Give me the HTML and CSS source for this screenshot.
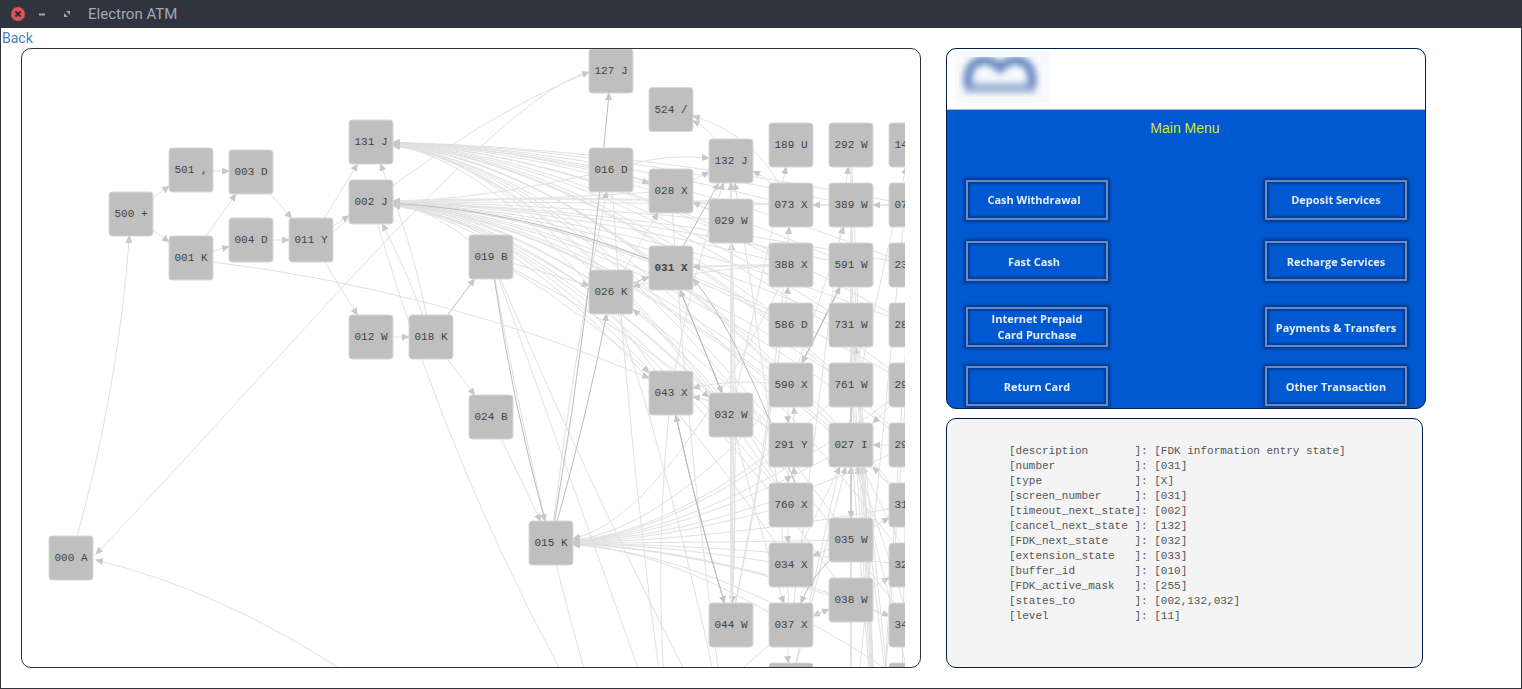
FILE: index.html
```html
<!DOCTYPE html>
<html lang="en">
<head>
    <meta charset="UTF-8">
    <title>Electron ATM</title>
    <link rel="stylesheet" href="styles.css">
</head>
<body>

    <div class="titlebar">
        <svg class="win-btn" width="16" height="16" viewBox="0 0 16 16">
            <circle cx="8" cy="8" r="7" fill="#d9545c"/>
            <path d="M5.5 5.5l5 5M10.5 5.5l-5 5" stroke="#3a2a33" stroke-width="2"/>
        </svg>
        <svg class="win-btn" width="16" height="16" viewBox="0 0 16 16">
            <path d="M5 8.5h6" stroke="#a4a9b4" stroke-width="2"/>
        </svg>
        <svg class="win-btn" width="16" height="16" viewBox="0 0 16 16">
            <path d="M8 5h4v4zM10 11H6V7z" fill="#a4a9b4"/>
        </svg>
        <span class="title">Electron ATM</span>
    </div>

    <a class="back-link" href="#">Back</a>

    <div class="content">
        <div class="graph-panel">
            <svg id="graph" width="883" height="618" viewBox="22 49 883 618">
                <defs>
                    <marker id="arrow" markerUnits="userSpaceOnUse" markerWidth="8" markerHeight="7" refX="7" refY="3.5" orient="auto">
                        <path d="M0 0L8 3.5L0 7z" fill="#c8c8c8"/>
                    </marker>
                </defs>
            </svg>
        </div>

        <div class="side-column">
            <div class="atm-screen">
                <div class="atm-header">
                    <svg width="96" height="52" viewBox="0 0 96 52">
                        <defs>
                            <filter id="logoBlur"><feGaussianBlur stdDeviation="3.2"/></filter>
                        </defs>
                        <rect width="96" height="52" fill="#f7f9fc"/>
                        <g filter="url(#logoBlur)">
                            <rect x="10" y="32" width="70" height="10" fill="#9fb4d6"/>
                            <path d="M13 36V28C13 8 33 4 45 17C57 4 77 8 77 28V36" fill="none" stroke="#6a8cc2" stroke-width="9"/>
                        </g>
                    </svg>
                </div>
                <div class="atm-title">Main Menu</div>
                <div class="atm-menu">
                    <div class="atm-btn atm-btn-shift">Cash Withdrawal</div>
                    <div class="atm-btn">Deposit Services</div>
                    <div class="atm-btn atm-btn-shift atm-btn-low">Fast Cash</div>
                    <div class="atm-btn atm-btn-low">Recharge Services</div>
                    <div class="atm-btn">Internet Prepaid<br>Card Purchase</div>
                    <div class="atm-btn atm-btn-low">Payments &amp; Transfers</div>
                    <div class="atm-btn atm-btn-low">Return Card</div>
                    <div class="atm-btn atm-btn-low">Other Transaction</div>
                </div>
            </div>

            <div class="state-panel">
<pre class="state-text">[description       ]: [FDK information entry state]
[number            ]: [031]
[type              ]: [X]
[screen_number     ]: [031]
[timeout_next_state]: [002]
[cancel_next_state ]: [132]
[FDK_next_state    ]: [032]
[extension_state   ]: [033]
[buffer_id         ]: [010]
[FDK_active_mask   ]: [255]
[states_to         ]: [002,132,032]
[level             ]: [11]</pre>
            </div>
        </div>
    </div>

    <script src="graph.js"></script>
</body>
</html>
```

FILE: styles.css
```css
* {
    box-sizing: border-box;
}

html, body {
    margin: 0;
    height: 689px;
    overflow: hidden;
}

body {
    background-color: white;
    border: 1px solid #2f343f;
    border-top: none;
    font-family: Roboto, sans-serif;
    font-size: 14px;
}

.titlebar {
    display: flex;
    align-items: center;
    height: 28px;
    padding-left: 9px;
    gap: 8px;
    background-color: #2f343f;
}

.title {
    margin-left: 6px;
    color: #a3a9b5;
    font-size: 15px;
}

.back-link {
    display: block;
    height: 20px;
    padding-left: 1px;
    line-height: 20px;
    color: #3f80c5;
    text-decoration: none;
}

.content {
    display: flex;
    align-items: flex-start;
    padding-left: 20px;
    gap: 25px;
}

.graph-panel {
    width: 900px;
    height: 620px;
    border: 1px solid #333;
    border-radius: 10px;
    overflow: hidden;
}

#graph {
    display: block;
}

.edge {
    fill: none;
    stroke: #e0e0e0;
    stroke-width: 1;
}

.edge-strong {
    stroke: #bcbcbc;
}

.edge-thick {
    stroke: #e6e6e6;
    stroke-width: 2;
}

.node-box {
    fill: #bfbfbf;
    stroke: #d8d8d8;
    stroke-width: 1;
}

.node-label {
    fill: #444;
    font-family: "Liberation Mono", monospace;
    font-size: 11px;
    text-anchor: middle;
    dominant-baseline: central;
}

.node-current .node-label {
    font-weight: bold;
}

.side-column {
    display: flex;
    flex-direction: column;
    width: 480px;
    gap: 9px;
}

.atm-screen {
    height: 361px;
    background-color: #0059d1;
    border: 1px solid #001f4d;
    border-radius: 10px;
    overflow: hidden;
}

.atm-header {
    height: 61px;
    padding: 2px 0 0 8px;
    background-color: white;
    border-bottom: 1px solid #a9bfdc;
}

.atm-header svg {
    display: block;
}

.atm-title {
    height: 70px;
    padding: 10px 2px 0 0;
    text-align: center;
    color: #d6e62e;
    font-family: "Liberation Sans", sans-serif;
    font-size: 14px;
    line-height: 17px;
}

.atm-menu {
    display: grid;
    grid-template-columns: 142px 142px;
    grid-template-rows: 61px 66px 59px 40px;
    justify-content: space-between;
    align-items: start;
    padding: 0 18px 0 19px;
}

.atm-btn {
    display: flex;
    align-items: center;
    justify-content: center;
    height: 40px;
    text-align: center;
    color: #e8eef8;
    font-family: "Open Sans", sans-serif;
    font-size: 11px;
    font-weight: 700;
    line-height: 16px;
    border: 2px solid #6f8ab8;
    box-shadow: 0 0 3px 2px #00398f, inset 0 0 2px 2px #003f9e;
    filter: blur(0.3px);
}

.atm-btn-shift {
    padding-right: 6px;
}

.atm-btn-low {
    padding-top: 2px;
}

.state-panel {
    width: 477px;
    height: 250px;
    padding: 25px 0 0 62px;
    background-color: #f4f4f4;
    border: 1px solid #001f4d;
    border-radius: 10px;
}

.state-text {
    margin: 0;
    color: #555;
    font-family: "Liberation Mono", monospace;
    font-size: 11px;
    line-height: 15px;
}
```

FILE: graph.js
```js
// Node positions come from the layout: name -> centre x, y
const columns = {
    71: { "000 A": 558 },
    131: { "500 +": 214 },
    191: { "501 ,": 170, "001 K": 258 },
    251: { "003 D": 172, "004 D": 240 },
    311: { "011 Y": 240 },
    371: { "131 J": 142, "002 J": 202, "012 W": 337 },
    431: { "018 K": 337 },
    491: { "019 B": 257, "024 B": 417 },
    551: { "015 K": 543 },
    611: { "127 J": 71, "016 D": 170, "026 K": 292 },
    671: { "524 /": 109.5, "028 X": 191, "031 X": 268, "043 X": 393 },
    731: { "132 J": 161, "029 W": 221, "032 W": 415, "044 W": 625 },
    791: { "189 U": 145, "073 X": 205, "388 X": 265, "586 D": 325, "590 X": 385, "291 Y": 445, "760 X": 505, "034 X": 565, "037 X": 625, "040 X": 685 },
    851: { "292 W": 145, "389 W": 205, "591 W": 265, "731 W": 325, "761 W": 385, "027 I": 445, "035 W": 540, "038 W": 600 },
    911: { "145 W": 145, "070 X": 205, "230 X": 265, "280 W": 325, "290 X": 385, "295 W": 445, "310 X": 505, "320 W": 565, "340 X": 625, "350 W": 685 }
};

// nodes below the visible part, only their edges show
const offscreen = {
    "o1": [611, 760], "o2": [671, 760], "o3": [731, 760], "o4": [851, 760], "o5": [900, 800], "o7": [878, 780]
};

const edges = [
    ["000 A", "500 +", 0.05], ["500 +", "501 ,"], ["500 +", "001 K"], ["501 ,", "003 D"], ["001 K", "003 D"],
    ["001 K", "004 D"], ["003 D", "011 Y"], ["004 D", "011 Y"], ["011 Y", "131 J"], ["011 Y", "002 J"],
    ["011 Y", "012 W"], ["012 W", "018 K"], ["018 K", "024 B"], ["018 K", "002 J", 0.03], ["018 K", "131 J", 0.05],
    ["024 B", "015 K"], ["019 B", "026 K"], ["019 B", "043 X", -0.05], ["019 B", "032 W", -0.05],
    ["015 K", "016 D", -0.02], ["016 D", "028 X"], ["016 D", "132 J", -0.1], ["026 K", "028 X"],
    ["028 X", "132 J"], ["029 W", "028 X"], ["029 W", "132 J"], ["073 X", "132 J", 0.1], ["132 J", "524 /", 0.12],
    ["073 X", "524 /", 0.2], ["032 W", "189 U"], ["037 X", "292 W"], ["590 X", "389 W"], ["040 X", "145 W"],
    ["230 X", "070 X", 0.1], ["761 W", "731 W", 0.1], ["044 W", "388 X", 0.02], ["291 Y", "590 X", 0.06], ["590 X", "291 Y", 0.06],
    ["760 X", "291 Y", 0.06], ["291 Y", "760 X", 0.06], ["760 X", "034 X", 0.06], ["037 X", "040 X", 0.06], ["035 W", "034 X"],
    ["038 W", "037 X"], ["037 X", "038 W"], ["034 X", "027 I"], ["038 W", "320 W"], ["035 W", "310 X"],
    ["038 W", "340 X"], ["035 W", "027 I"], ["038 W", "027 I"], ["295 W", "027 I"], ["290 X", "027 I"],
    ["340 X", "027 I"], ["320 W", "027 I"], ["310 X", "027 I"], ["350 W", "027 I"], ["040 X", "027 I"],
    ["292 W", "o7"], ["389 W", "o7"], ["591 W", "o7"], ["731 W", "o7"], ["761 W", "o7"],
    ["027 I", "o7"], ["292 W", "o4"], ["389 W", "o4"], ["591 W", "o4"], ["145 W", "o4"],
    ["070 X", "o5"], ["230 X", "o7"], ["280 W", "o7"], ["761 W", "o5"], ["731 W", "o5"],
    ["044 W", "029 W", 0.01], ["044 W", "073 X", 0.03], ["032 W", "037 X", 0.02], ["029 W", "044 W", -0.02], ["032 W", "044 W", -0.03],
    ["043 X", "132 J", -0.04], ["037 X", "132 J", 0.02], ["388 X", "026 K", 0.05], ["590 X", "043 X", 0.08], ["291 Y", "043 X", 0.12],
    ["760 X", "026 K", 0.1], ["019 B", "o1", 0.03], ["019 B", "o3", 0.02], ["019 B", "o2"], ["043 X", "o2", 0.05],
    ["037 X", "o1", -0.05], ["026 K", "o3", -0.03], ["016 D", "o2", 0.02], ["028 X", "o3", 0.02], ["002 J", "o1", 0.06]
];

const strongEdges = [
    ["018 K", "019 B"], ["019 B", "015 K", 0.03], ["015 K", "127 J", 0.02], ["015 K", "026 K", 0.02], ["026 K", "031 X"],
    ["031 X", "132 J"], ["031 X", "032 W"], ["032 W", "031 X"], ["043 X", "044 W", 0.02], ["044 W", "043 X", -0.02],
    ["590 X", "591 W"], ["591 W", "590 X"], ["035 W", "037 X", 0.1], ["761 W", "035 W"],
    ["031 X", "002 J", 0.08]
];

const thickEdges = [
    ["044 W", "132 J", 0], ["073 X", "002 J", 0.02], ["389 W", "073 X", 0], ["070 X", "389 W", 0], ["388 X", "031 X", 0.01]
];

// long edges that bend around the layout, given as they are drawn
const longCurves = [
    ["M589 72C500 95 300 340 96 554", "edge"],
    ["M333 232Q470 120 589 72", "edge"],
    ["M345 672Q220 590 96 560", "edge"],
    ["M213 262Q440 290 649 378", "edge"],
    ["M795 483C770 420 730 320 693 279", "edge edge-strong"]
];

// long edges running back to one node, they leave it almost level
const backFans = {
    "131 J": ["016 D", "028 X", "026 K", "043 X", "032 W", "073 X", "388 X", "586 D", "590 X", "291 Y", "760 X", "389 W", "591 W", "731 W", "761 W", "027 I", "035 W", "070 X", "230 X", "280 W", "290 X", "295 W", "310 X", "320 W"],
    "002 J": ["016 D", "019 B", "026 K", "028 X", "029 W", "043 X", "032 W", "388 X", "586 D", "590 X", "291 Y", "760 X", "034 X", "389 W", "591 W", "731 W", "761 W", "027 I", "038 W", "230 X", "280 W", "290 X", "295 W", "310 X", "340 X"],
    "015 K": ["388 X", "590 X", "291 Y", "760 X", "034 X", "037 X", "761 W", "027 I", "035 W", "038 W", "290 X", "295 W", "310 X", "320 W", "340 X", "350 W"]
};

const svg = document.getElementById("graph");
const NS = "http://www.w3.org/2000/svg";
const HALF = 22;
const positions = {};

for (const x in columns) {
    for (const name in columns[x]) {
        positions[name] = [Number(x), columns[x][name]];
    }
}
Object.assign(positions, offscreen);

// Point where the line from a node centre towards (px, py) leaves its box
function boxExit(centre, px, py) {
    const dx = px - centre[0];
    const dy = py - centre[1];
    const scale = HALF / Math.max(Math.abs(dx), Math.abs(dy), 1);
    return [centre[0] + dx * scale, centre[1] + dy * scale];
}

function addPath(d, className) {
    const path = document.createElementNS(NS, "path");
    path.setAttribute("d", d);
    path.setAttribute("class", className);
    path.setAttribute("marker-end", "url(#arrow)");
    svg.appendChild(path);
}

function drawCurve(from, to, cx, cy, className) {
    const start = boxExit(from, cx, cy);
    const end = boxExit(to, cx, cy);
    addPath(`M${start[0].toFixed(1)} ${start[1].toFixed(1)}Q${cx.toFixed(1)} ${cy.toFixed(1)} ${end[0].toFixed(1)} ${end[1].toFixed(1)}`, className);
}

function drawEdge(edge, className) {
    const from = positions[edge[0]];
    const to = positions[edge[1]];
    const bend = edge[2] || 0;
    const dx = to[0] - from[0];
    const dy = to[1] - from[1];
    drawCurve(from, to, (from[0] + to[0]) / 2 - dy * bend, (from[1] + to[1]) / 2 + dx * bend, className);
}

for (const target in backFans) {
    const to = positions[target];
    backFans[target].forEach(source => {
        const from = positions[source];
        drawCurve(from, to, to[0] + (from[0] - to[0]) * 0.45, to[1] + (from[1] - to[1]) * 0.08, "edge");
    });
}

edges.forEach(edge => drawEdge(edge, "edge"));
thickEdges.forEach(edge => drawEdge(edge, "edge edge-thick"));
strongEdges.forEach(edge => drawEdge(edge, "edge edge-strong"));
longCurves.forEach(curve => addPath(curve[0], curve[1]));

for (const name in positions) {
    if (offscreen[name]) continue;
    const group = document.createElementNS(NS, "g");
    if (name === "031 X") group.setAttribute("class", "node-current");

    const box = document.createElementNS(NS, "rect");
    box.setAttribute("class", "node-box");
    box.setAttribute("x", positions[name][0] - HALF);
    box.setAttribute("y", positions[name][1] - HALF);
    box.setAttribute("width", HALF * 2);
    box.setAttribute("height", HALF * 2);
    box.setAttribute("rx", 3);

    const label = document.createElementNS(NS, "text");
    label.setAttribute("class", "node-label");
    label.setAttribute("x", positions[name][0]);
    label.setAttribute("y", positions[name][1]);
    if (name !== "040 X" && name !== "350 W") label.textContent = name;

    group.appendChild(box);
    group.appendChild(label);
    svg.appendChild(group);
}
```
